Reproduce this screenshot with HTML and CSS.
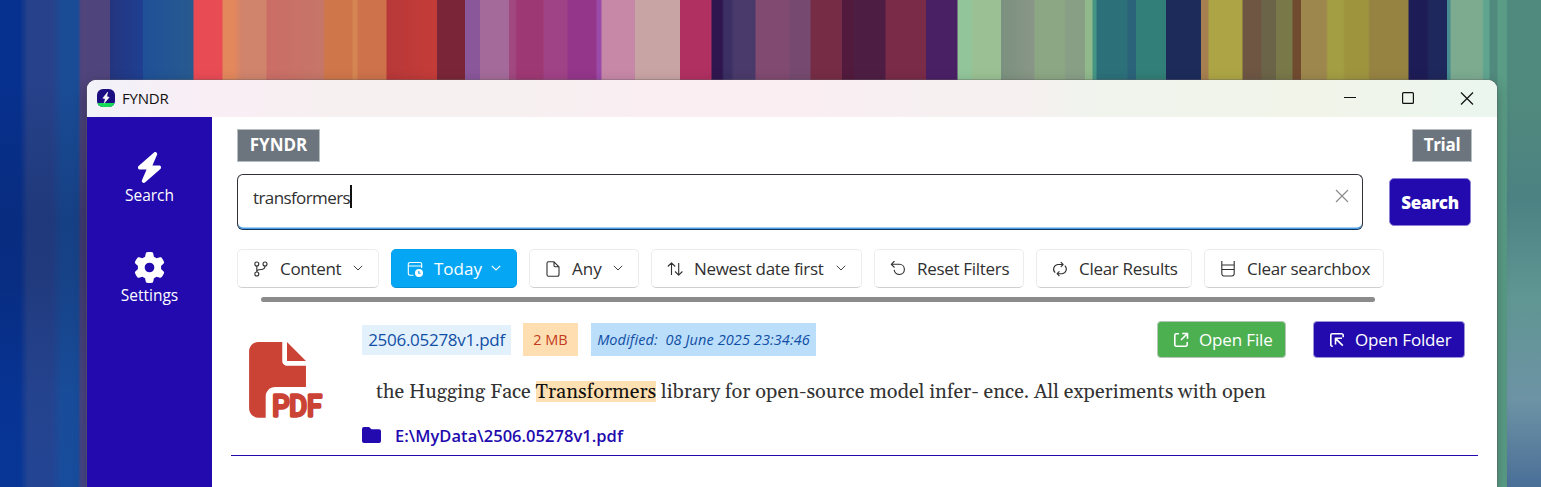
FILE: index.html
```
<!DOCTYPE html>
<html lang="en">
<head>
<meta charset="utf-8">
<title>FYNDR</title>
<link rel="stylesheet" href="styles.css">
</head>
<body>
<div class="desktop">
<div class="window">
  <header class="titlebar">
    <svg class="app-icon" viewBox="0 0 18 18"><defs><clipPath id="r"><rect width="18" height="18" rx="6"/></clipPath></defs><g clip-path="url(#r)"><rect width="18" height="18" fill="#1b0d82"/><rect y="14" width="18" height="4" fill="#15db58"/></g><path d="M10.700 3 5.800 9.200l2.500.5L7.200 14.300l5-6-2.500-.7z" fill="#fff" stroke="#fff" stroke-width=".5"/></svg>
    <span class="app-name">FYNDR</span>
    <svg class="win-controls" viewBox="0 0 132 14" fill="none" stroke="#111" stroke-width="1.2"><path d="M1 6.500h12"/><rect x="59.600" y="1.600" width="10.800" height="10.800" rx="1"/><path d="m118 1.500 12 12m0-12-12 12"/></svg>
  </header>
  <div class="body">
    <nav class="sidebar">
      <div class="nav-item">
        <svg class="bolt" viewBox="0 0 448 512" fill="#fff"><path d="M349.4 44.6c5.9-13.7 1.5-29.7-10.6-38.5s-28.6-8-39.9 1.8l-256 224c-10 8.8-13.6 22.9-8.9 35.3S50.7 288 64 288H175.5L98.6 467.4c-5.9 13.7-1.5 29.7 10.6 38.5s28.6 8 39.9-1.8l256-224c10-8.8 13.6-22.9 8.9-35.3s-16.6-20.7-30-20.7H272.5L349.4 44.6z"/></svg>
        <span>Search</span>
      </div>
      <div class="nav-item">
        <svg class="gear" viewBox="0 0 512 512" fill="#fff"><path d="M495.9 166.6c3.2 8.7 .5 18.4-6.4 24.6l-43.3 39.4c1.1 8.3 1.7 16.8 1.7 25.4s-.6 17.1-1.7 25.4l43.3 39.4c6.9 6.2 9.6 15.9 6.4 24.6c-4.4 11.9-9.7 23.3-15.8 34.3l-4.7 8.1c-6.6 11-14 21.4-22.1 31.2c-5.9 7.2-15.7 9.6-24.5 6.8l-55.7-17.7c-13.4 10.3-28.2 18.9-44 25.4l-12.5 57.1c-2 9.1-9 16.3-18.2 17.8c-13.8 2.3-28 3.5-42.5 3.5s-28.7-1.2-42.5-3.5c-9.2-1.5-16.2-8.7-18.2-17.8l-12.5-57.1c-15.8-6.5-30.6-15.1-44-25.4L83.1 425.9c-8.8 2.8-18.6 .3-24.5-6.8c-8.1-9.8-15.5-20.2-22.1-31.2l-4.7-8.1c-6.1-11-11.4-22.4-15.8-34.3c-3.2-8.7-.5-18.4 6.4-24.6l43.3-39.4C64.6 273.1 64 264.6 64 256s.6-17.1 1.7-25.4L22.4 191.2c-6.9-6.2-9.6-15.9-6.4-24.6c4.4-11.9 9.7-23.3 15.8-34.3l4.7-8.1c6.6-11 14-21.4 22.1-31.2c5.9-7.2 15.7-9.6 24.5-6.8l55.7 17.7c13.4-10.3 28.2-18.9 44-25.4l12.5-57.1c2-9.1 9-16.3 18.2-17.8C227.3 1.2 241.5 0 256 0s28.7 1.2 42.5 3.5c9.2 1.5 16.2 8.7 18.2 17.8l12.5 57.1c15.8 6.5 30.6 15.1 44 25.4l55.7-17.7c8.8-2.8 18.6-.3 24.5 6.8c8.1 9.8 15.5 20.2 22.1 31.2l4.7 8.1c6.1 11 11.4 22.4 15.8 34.3zM256 336a80 80 0 1 0 0-160 80 80 0 1 0 0 160z"/></svg>
        <span>Settings</span>
      </div>
    </nav>
    <main class="main">
      <div class="badges"><span class="badge brand">FYNDR</span><span class="badge trial">Trial</span></div>
      <div class="search-row">
        <div class="searchbox"><span class="query">transformers</span><i class="caret"></i>
          <svg class="clear" viewBox="0 0 14 14" stroke="#8c8c8c" stroke-width="1.2"><path d="m1 1 12 12M13 1 1 13"/></svg></div>
        <button class="search-btn">Search</button>
      </div>
      <div class="filters">
        <button class="chip c1"><svg class="ic" viewBox="0 0 16 16"><circle cx="3.800" cy="3" r="2"/><circle cx="12" cy="3" r="2"/><circle cx="3.800" cy="13" r="2"/><path d="M3.800 5v6M12 5c0 3-1.500 3.500-4 3.500-2.500 0-4.200.5-4.200 2.500"/></svg><span>Content</span><svg class="chev" viewBox="0 0 10 6"><path d="m.8.8 4.200 4.200L9.200.8"/></svg></button>
        <button class="chip c2 active"><svg class="ic" viewBox="0 0 16 16"><path d="M6.500 14.300H3a1.700 1.700 0 0 1-1.700-1.700V3.200A1.700 1.700 0 0 1 3 1.500h10a1.700 1.700 0 0 1 1.700 1.700V7M1.300 5h13.400"/><circle cx="12" cy="12" r="4" fill="#fff" stroke="none"/><path d="M11.800 10v2.200h1.800" stroke="#05a7f5"/></svg><span>Today</span><svg class="chev" viewBox="0 0 10 6"><path d="m.8.8 4.200 4.200L9.200.8"/></svg></button>
        <button class="chip c3"><svg class="ic" viewBox="0 0 16 16"><path d="M9 .8H3.500A1.500 1.500 0 0 0 2 2.300v11.400a1.500 1.500 0 0 0 1.500 1.500h9a1.500 1.500 0 0 0 1.500-1.500V5.800zM9 .8v3.600c0 .8.6 1.400 1.400 1.400H14"/></svg><span>Any</span><svg class="chev" viewBox="0 0 10 6"><path d="m.8.8 4.200 4.200L9.200.8"/></svg></button>
        <button class="chip c4"><svg class="ic" viewBox="0 0 16 16"><path d="M4.500 14V2M.8 5.500 4.500 1.800l3.700 3.700M11.700 2v12M8 10.500l3.700 3.700 3.700-3.700"/></svg><span>Newest date first</span><svg class="chev" viewBox="0 0 10 6"><path d="m.8.8 4.200 4.200L9.200.8"/></svg></button>
        <button class="chip c5"><svg class="ic" viewBox="0 0 16 16"><path d="M4.500 0 1.300 3.300l3.200 3.200M1.500 3.300h7.800a5.100 5.100 0 1 1-5.100 5.600"/></svg><span>Reset Filters</span></button>
        <button class="chip c6"><svg class="ic" viewBox="0 0 16 16"><path d="M3.200 11.700A4.700 4.700 0 0 1 5.700 3.500H11M8.800 1.200 11.100 3.500 8.800 5.800M12.800 4.600a4.700 4.700 0 0 1-2.500 8.100H5.200M7.400 10.400 5.100 12.700 7.400 15"/></svg><span>Clear Results</span></button>
        <button class="chip c7"><svg class="ic" viewBox="0 0 16 16"><path d="M1.800 0v12.500a2.500 2.500 0 0 0 2.500 2.500h7.400a2.500 2.500 0 0 0 2.500-2.500V0M1.800 4h12.400M1.800 8.500h12.400"/></svg><span>Clear searchbox</span></button>
      </div>
      <div class="scrollbar"></div>
      <article class="result">
        <svg class="pdf" viewBox="0 0 512 520" fill="#cb4335"><path d="M0 64C0 28.700 28.700 0 64 0H224v128c0 17.700 14.300 32 32 32h128v144H176c-35.300 0-64 28.700-64 64v144H64c-35.300 0-64-28.700-64-64zM384 128H256V0z"/><text class="pdf-label" x="156" y="500" textLength="336" lengthAdjust="spacingAndGlyphs">PDF</text></svg>
        <div class="details">
          <div class="meta">
            <span class="file">2506.05278v1.pdf</span><span class="size">2 MB</span><span class="modified">Modified:&nbsp; 08 June 2025 23:34:46</span>
            <button class="open open-file"><svg class="ic" viewBox="0 0 16 16"><path d="M6 1.800H3.300A1.500 1.500 0 0 0 1.800 3.300v9.400a1.500 1.500 0 0 0 1.500 1.500h9.400a1.500 1.500 0 0 0 1.500-1.500V10M9.200 1.500h5.300v5.300M14.200 1.800 8 8"/></svg><span>Open File</span></button>
            <button class="open open-folder"><svg class="ic" viewBox="0 0 16 16"><path d="M3.800 14.200H3.300a1.500 1.500 0 0 1-1.500-1.500V3.300a1.500 1.500 0 0 1 1.500-1.500h9.400a1.500 1.500 0 0 1 1.500 1.500v2M6.500 12.500V6.300h6.500M6.800 6.600l7 7"/></svg><span>Open Folder</span></button>
          </div>
          <p class="snippet">the Hugging Face <mark>Transformers</mark> library for open-source model infer- ence. All experiments with open</p>
          <div class="path"><svg class="folder" viewBox="0 0 19 16" fill="#220aae"><path d="M2 0h5l2.500 2.200H17a2 2 0 0 1 2 2V14a2 2 0 0 1-2 2H2a2 2 0 0 1-2-2V2a2 2 0 0 1 2-2z"/></svg><span>E:\MyData\2506.05278v1.pdf</span></div>
        </div>
      </article>
    </main>
  </div>
</div>
</div>
</body>
</html>
```
FILE: styles.css
```
* { box-sizing: border-box; }
body { margin: 0; font-family: "Open Sans", "Noto Sans", sans-serif; color: #303030; }
span, p { white-space: nowrap; }
svg { display: block; flex: none; }
button { font: inherit; margin: 0; }
.desktop {
  width: 1541px; height: 487px; padding: 80px 0 0 87px; overflow: hidden;
  background:
    linear-gradient(180deg, #4c888200 0, #4c828300 100px, #4c8283 200px, #609693 300px, #6d93a5 400px, #4a6f98 487px) 1507px 0 / 34px 487px no-repeat,
    linear-gradient(180deg, #0a1c5000 80px, #0a1c5040 220px, #0a1c5033 280px, #0a50c018 400px, #0a50c02a 487px) 0 0 / 87px 487px no-repeat,
    linear-gradient(90deg,
      #07318f 0 20px, #27428a 28px 52px, #1a4c96 62px 78px, #50447c 81px 110px, #24357f 110px, #1f3f92 143px,
      #1f5098 143px, #285a8f 193px, #e94b55 194px 222px, #e3875c 223px 234px, #d0846c 242px 266px, #cb6d66 267px, #c67668 323px,
      #cf764a 325px 352px, #d58552 353px 357px, #cd724b 358px 386px, #b83839 387px, #c43c38 437px, #7a2638 437px 465px,
      #8a579b 465px 480px, #a46b9a 480px 509px, #a0487f 509px 515px, #9e3874 517px 543px, #a04286 544px 567px,
      #94368a 568px 596px, #9a4aa8 597px 601px, #c787a7 602px 635px, #c9a4a5 635px 680px, #b03062 680px 711px,
      #30164f 712px 722px, #3b2f63 724px 731px, #493a6b 734px 755px, #814a71 756px 789px, #764a70 790px 810px,
      #762c45 811px 842px, #521a3d 842px 853px, #4e1d43 855px 885px, #792b48 886px 926px, #4a2065 926px 957px,
      #92c59a 958px 971px, #9ac093 973px 1001px, #7b917f 1001px, #899687 1034px, #8ca784 1035px 1064px, #889f86 1066px 1085px,
      #90b98c 1085px 1092px, #459585 1093px 1096px, #2c707a 1097px 1127px, #2b637a 1128px 1136px, #327e78 1136px 1166px,
      #1c2b5a 1166px 1201px, #a77f50 1201px 1208px, #ada545 1209px 1242px, #6e5643 1243px 1261px, #6b6448 1262px 1276px,
      #797849 1276px 1292px, #714b30 1293px 1301px, #9d874d 1301px 1326px, #a39d43 1328px 1343px, #9f943e 1345px 1368px,
      #968342 1370px 1408px, #1e1c56 1409px 1427px, #1f285c 1429px 1447px, #468e90 1447px 1450px, #7cab90 1451px 1482px,
      #5fa48e 1484px 1489px, #50897d 1490px 1497px, #5a9c86 1498px 1506px, #50897d 1508px 1541px);
}
.window { width: 1410px; height: 407px; border-radius: 9px 9px 0 0; background: #fff; overflow: hidden; box-shadow: 0 0 0 1px #6665, 0 4px 14px #0004; }
.titlebar { height: 37px; display: flex; align-items: center; padding: 0 22px 1px 10px; background: linear-gradient(90deg, #f2f2f9 0, #faeef5 120px, #f6f0f0 260px, #f6f0f0 410px, #faeef3 560px, #faeef3 720px, #f6f0f1 860px, #f6f0f0 930px, #f0f4ed 1010px, #f2f4e9 1230px, #ebf6ee 1390px); }
.app-icon { width: 18px; height: 18px; }
.app-name { margin-left: 7px; font-size: 15px; letter-spacing: -.2px; color: #111; }
.win-controls { width: 132px; height: 14px; margin-left: auto; }
.body { display: flex; height: 370px; }
.sidebar { width: 125px; background: #220aae; padding-top: 35px; color: #fff; }
.nav-item { height: 100px; display: flex; flex-direction: column; align-items: center; font-size: 15.500px; line-height: 22px; }
.bolt { width: 27px; height: 31px; margin-bottom: 1px; }
.gear { width: 31px; height: 31px; margin-bottom: 1px; }
.main { width: 1285px; padding: 12px 19px 0 25px; }
.badges { display: flex; justify-content: space-between; padding-right: 6px; }
.badge { height: 33px; border: 1px solid #b9bec2; background: #6c757d; color: #fff; font-weight: 700; font-size: 17px; line-height: 30px; text-align: center; }
.brand { width: 83px; }
.trial { width: 60px; letter-spacing: -.3px; }
.search-row { display: flex; align-items: center; margin-top: 12px; gap: 26px; }
.searchbox { width: 1126px; height: 56px; border: 1px solid #303238; border-bottom-color: #14365c; border-radius: 6px; box-shadow: inset 0 -1.5px #4b9ee6; display: flex; align-items: flex-start; padding: 10px 13px 0 15px; }
.query { font-size: 17px; letter-spacing: -.6px; line-height: 26px; }
.caret { width: 2px; height: 23px; background: #111; }
.clear { width: 14px; height: 14px; margin: 4px 0 0 auto; }
.search-btn { width: 82px; height: 48px; padding: 0; border: 1px solid #8b80d6; border-radius: 5px; background: #220aae; color: #fff; font-weight: 800; font-size: 17px; letter-spacing: -.3px; }
.filters { display: flex; gap: 12px; margin-top: 19px; }
.chip { height: 39px; display: flex; align-items: center; padding: 0 15px; background: #fff; border: 1px solid #ececec; border-bottom-color: #cfcfcf; border-radius: 5px; font-size: 17px; letter-spacing: -.3px; color: #303030; }
.ic { width: 16px; height: 16px; fill: none; stroke: currentColor; stroke-width: 1.1; margin-right: 11px; stroke-linejoin: round; }
.chev { width: 10px; height: 6px; fill: none; stroke: currentColor; stroke-width: .9; margin-left: auto; margin-bottom: 2px; }
.c1 { width: 142px; }
.c2 { width: 126px; letter-spacing: 0; }
.c2 .chev { stroke-width: 1.2; }
.c3 { width: 110px; letter-spacing: 0; }
.c4 { width: 211px; }
.c5 { width: 150px; }
.c6 { width: 156px; }
.c7 { width: 180px; }
.active { background: #05a7f5; border-color: #05a0ec; border-bottom-color: #0590d5; color: #fff; }
.scrollbar { width: 1114px; height: 5px; margin: 9px 0 0 24px; border-radius: 3px; background: #8b8b8b; }
.result { display: flex; width: 1247px; height: 154px; margin-left: -6px; padding: 19px 13px 0 18px; border-bottom: 1px solid #220aae; }
.pdf { width: 76px; height: 77px; margin-top: 21px; overflow: visible; }
.pdf-label { font-family: Roboto, sans-serif; font-weight: 400; font-size: 194px; stroke: #cb4335; stroke-width: 22px; stroke-linejoin: round; }
.details { margin-left: 37px; width: 1103px; }
.meta { display: flex; align-items: center; height: 37px; }
.file { width: 149px; height: 30px; background: #e3f1fd; color: #114fa5; font-size: 17px; letter-spacing: -.28px; line-height: 29px; text-align: center; }
.size { width: 55px; height: 33px; margin-left: 12px; background: #ffdfb2; color: #c23b1b; font-size: 14.500px; line-height: 34px; text-align: center; }
.modified { width: 225px; height: 33px; margin-left: 13px; background: #bbdefb; color: #114fa5; font-size: 14.500px; letter-spacing: .1px; font-style: italic; line-height: 34px; text-align: center; }
.open { height: 37px; display: flex; align-items: center; padding: 0 14px 0 15px; border: 1px solid #b5c6b6; border-radius: 4px; color: #fff; font-size: 17px; letter-spacing: -.15px; }
.open .ic { stroke-width: 1.6; margin-right: 10px; }
.open-file { width: 129px; margin-left: auto; background: #4caf50; }
.open-folder { width: 152px; margin-left: 27px; background: #220aae; border-color: #9c94d5; }
.snippet { margin: 19px 0 0 14px; font-family: Gelasio, Georgia, "Liberation Serif", serif; font-size: 20px; line-height: 30px; color: #333; }
mark { background: linear-gradient(transparent 2px, #ffe0b2 2px calc(100% - 3px), transparent 0); color: #111; }
.path { display: flex; align-items: center; margin-top: 17px; height: 22px; color: #220aae; font-size: 16.500px; letter-spacing: .03px; font-weight: 600; }
.folder { width: 19px; height: 16px; margin-right: 14px; }
```
